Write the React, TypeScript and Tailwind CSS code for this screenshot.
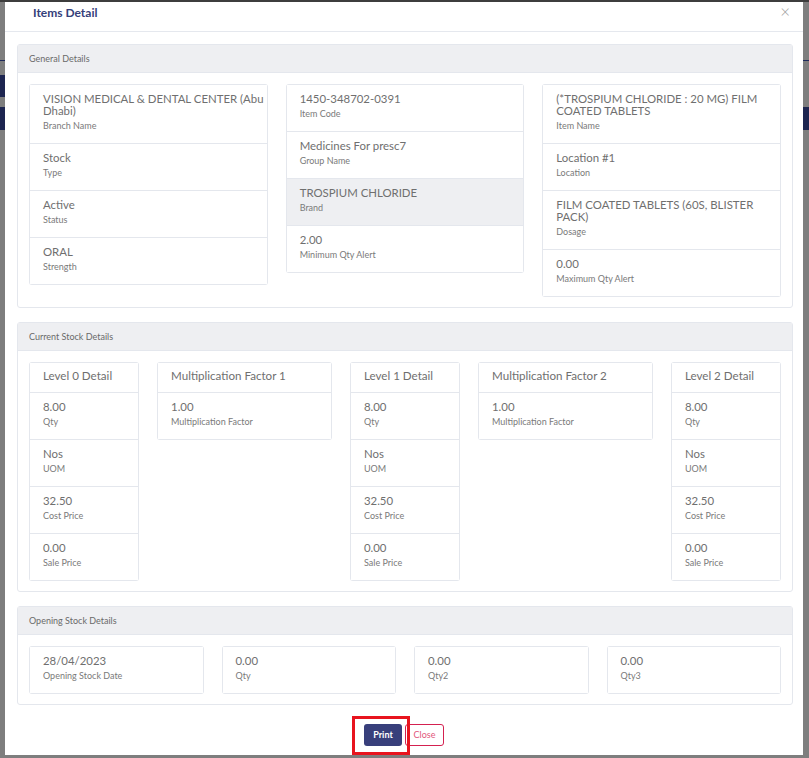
import React from "react";

const F = { fontFamily: "Lato, 'Open Sans', sans-serif" };

type KV = { v: string; l: string; hl?: boolean };

function Item({ v, l, hl, first }: KV & { first?: boolean }) {
  return (
    <div
      className={`pl-[13px] pr-[2px] pt-[8px] pb-[11px] border-[#e4e7ed] border-x ${first ? "border-y" : "border-b"} ${hl ? "bg-[#eeeff2]" : "bg-white"}`}
    >
      <div className="text-[11.4px] leading-[12px] text-[#6f6f6f]">{v}</div>
      <div className="mt-[3px] text-[9px] leading-[12px] text-[#7a7a7a]">{l}</div>
    </div>
  );
}

function ListCol({ items }: { items: KV[] }) {
  return (
    <div className="flex flex-col rounded-[3px] overflow-hidden self-start">
      {items.map((it, i) => (
        <Item key={i} {...it} first={i === 0} />
      ))}
    </div>
  );
}

function TitledCol({ title, items }: { title: string; items: KV[] }) {
  return (
    <div className="flex flex-col rounded-[3px] overflow-hidden self-start">
      <div className="px-[13px] pt-[7px] pb-[10px] border border-[#e4e7ed] text-[11.6px] leading-[12px] text-[#6f6f6f]">
        {title}
      </div>
      {items.map((it, i) => (
        <Item key={i} {...it} />
      ))}
    </div>
  );
}

function Card({ title, children }: { title: string; children: React.ReactNode }) {
  return (
    <div className="border border-[#e4e7ed] rounded-[3px] bg-white">
      <div className="h-[28px] flex items-center px-[11px] bg-[#eeeff2] border-b border-[#e4e7ed] text-[9px] text-[#6a6a6a]">
        {title}
      </div>
      <div className="px-[11px] pt-[11px] pb-[10px]">{children}</div>
    </div>
  );
}

const level = (q: string): KV[] => [
  { v: q, l: "Qty" },
  { v: "Nos", l: "UOM" },
  { v: "32.50", l: "Cost Price" },
  { v: "0.00", l: "Sale Price" },
];

export default function App() {
  return (
    <div style={F} className="relative w-[809px] h-[758px] bg-[#7e7e7e] overflow-hidden">
      {/* page behind overlay */}
      <div className="absolute left-0 top-0 w-full h-[2px] bg-[#3d3d3d]" />
      <div className="absolute left-0 top-[60px] w-full h-[1px] bg-[#1e2a5a]" />
      <div className="absolute left-0 top-[75px] w-[6px] h-[22px] bg-[#1d2550]" />
      <div className="absolute left-0 top-[107px] w-full h-[23px] bg-[#1d2550]" />

      <div className="absolute left-[5px] top-[2px] w-[798px] h-[753px] bg-white flex flex-col">
        {/* header */}
        <div className="h-[30px] flex items-start justify-between border-b border-[#e5e8ee] pl-[28px] pr-[13px]">
          <div className="pt-[2px] text-[12px] font-bold text-[#34407a]">Items Detail</div>
          <div className="pt-[1px] text-[17px] leading-[18px] text-[#a0a0a0] font-light">×</div>
        </div>

        {/* body */}
        <div className="pl-[12px] pr-[10px] pt-[12px] flex flex-col gap-[14px]">
          <Card title="General Details">
            <div className="grid grid-cols-3 gap-x-[18px]">
              <ListCol
                items={[
                  { v: "VISION MEDICAL & DENTAL CENTER (Abu Dhabi)", l: "Branch Name" },
                  { v: "Stock", l: "Type" },
                  { v: "Active", l: "Status" },
                  { v: "ORAL", l: "Strength" },
                ]}
              />
              <ListCol
                items={[
                  { v: "1450-348702-0391", l: "Item Code" },
                  { v: "Medicines For presc7", l: "Group Name" },
                  { v: "TROSPIUM CHLORIDE", l: "Brand", hl: true },
                  { v: "2.00", l: "Minimum Qty Alert" },
                ]}
              />
              <ListCol
                items={[
                  { v: "(*TROSPIUM CHLORIDE : 20 MG) FILM COATED TABLETS", l: "Item Name" },
                  { v: "Location #1", l: "Location" },
                  { v: "FILM COATED TABLETS (60S, BLISTER PACK)", l: "Dosage" },
                  { v: "0.00", l: "Maximum Qty Alert" },
                ]}
              />
            </div>
          </Card>

          <Card title="Current Stock Details">
            <div className="grid grid-cols-[2fr_3.18fr_2fr_3.18fr_2fr] gap-x-[18px]">
              <TitledCol title="Level 0 Detail" items={level("8.00")} />
              <TitledCol title="Multiplication Factor 1" items={[{ v: "1.00", l: "Multiplication Factor" }]} />
              <TitledCol title="Level 1 Detail" items={level("8.00")} />
              <TitledCol title="Multiplication Factor 2" items={[{ v: "1.00", l: "Multiplication Factor" }]} />
              <TitledCol title="Level 2 Detail" items={level("8.00")} />
            </div>
          </Card>

          <Card title="Opening Stock Details">
            <div className="grid grid-cols-4 gap-x-[18px]">
              <ListCol items={[{ v: "28/04/2023", l: "Opening Stock Date" }]} />
              <ListCol items={[{ v: "0.00", l: "Qty" }]} />
              <ListCol items={[{ v: "0.00", l: "Qty2" }]} />
              <ListCol items={[{ v: "0.00", l: "Qty3" }]} />
            </div>
          </Card>
        </div>

        {/* footer */}
        <div className="flex justify-center gap-[3px] pt-[19px]">
          <div className="relative">
            <div className="w-[38px] h-[22px] rounded-[3px] bg-[#383f7b] text-white text-[9px] font-bold flex items-center justify-center">
              Print
            </div>
            <div className="absolute left-[-12px] top-[-8px] w-[58px] h-[39px] border-[3px] border-[#e8141e]" />
          </div>
          <div className="w-[39px] h-[22px] rounded-[3px] border border-[#d42150] bg-white text-[#e2587b] text-[9px] flex items-center justify-center">
            Close
          </div>
        </div>
      </div>
    </div>
  );
}
